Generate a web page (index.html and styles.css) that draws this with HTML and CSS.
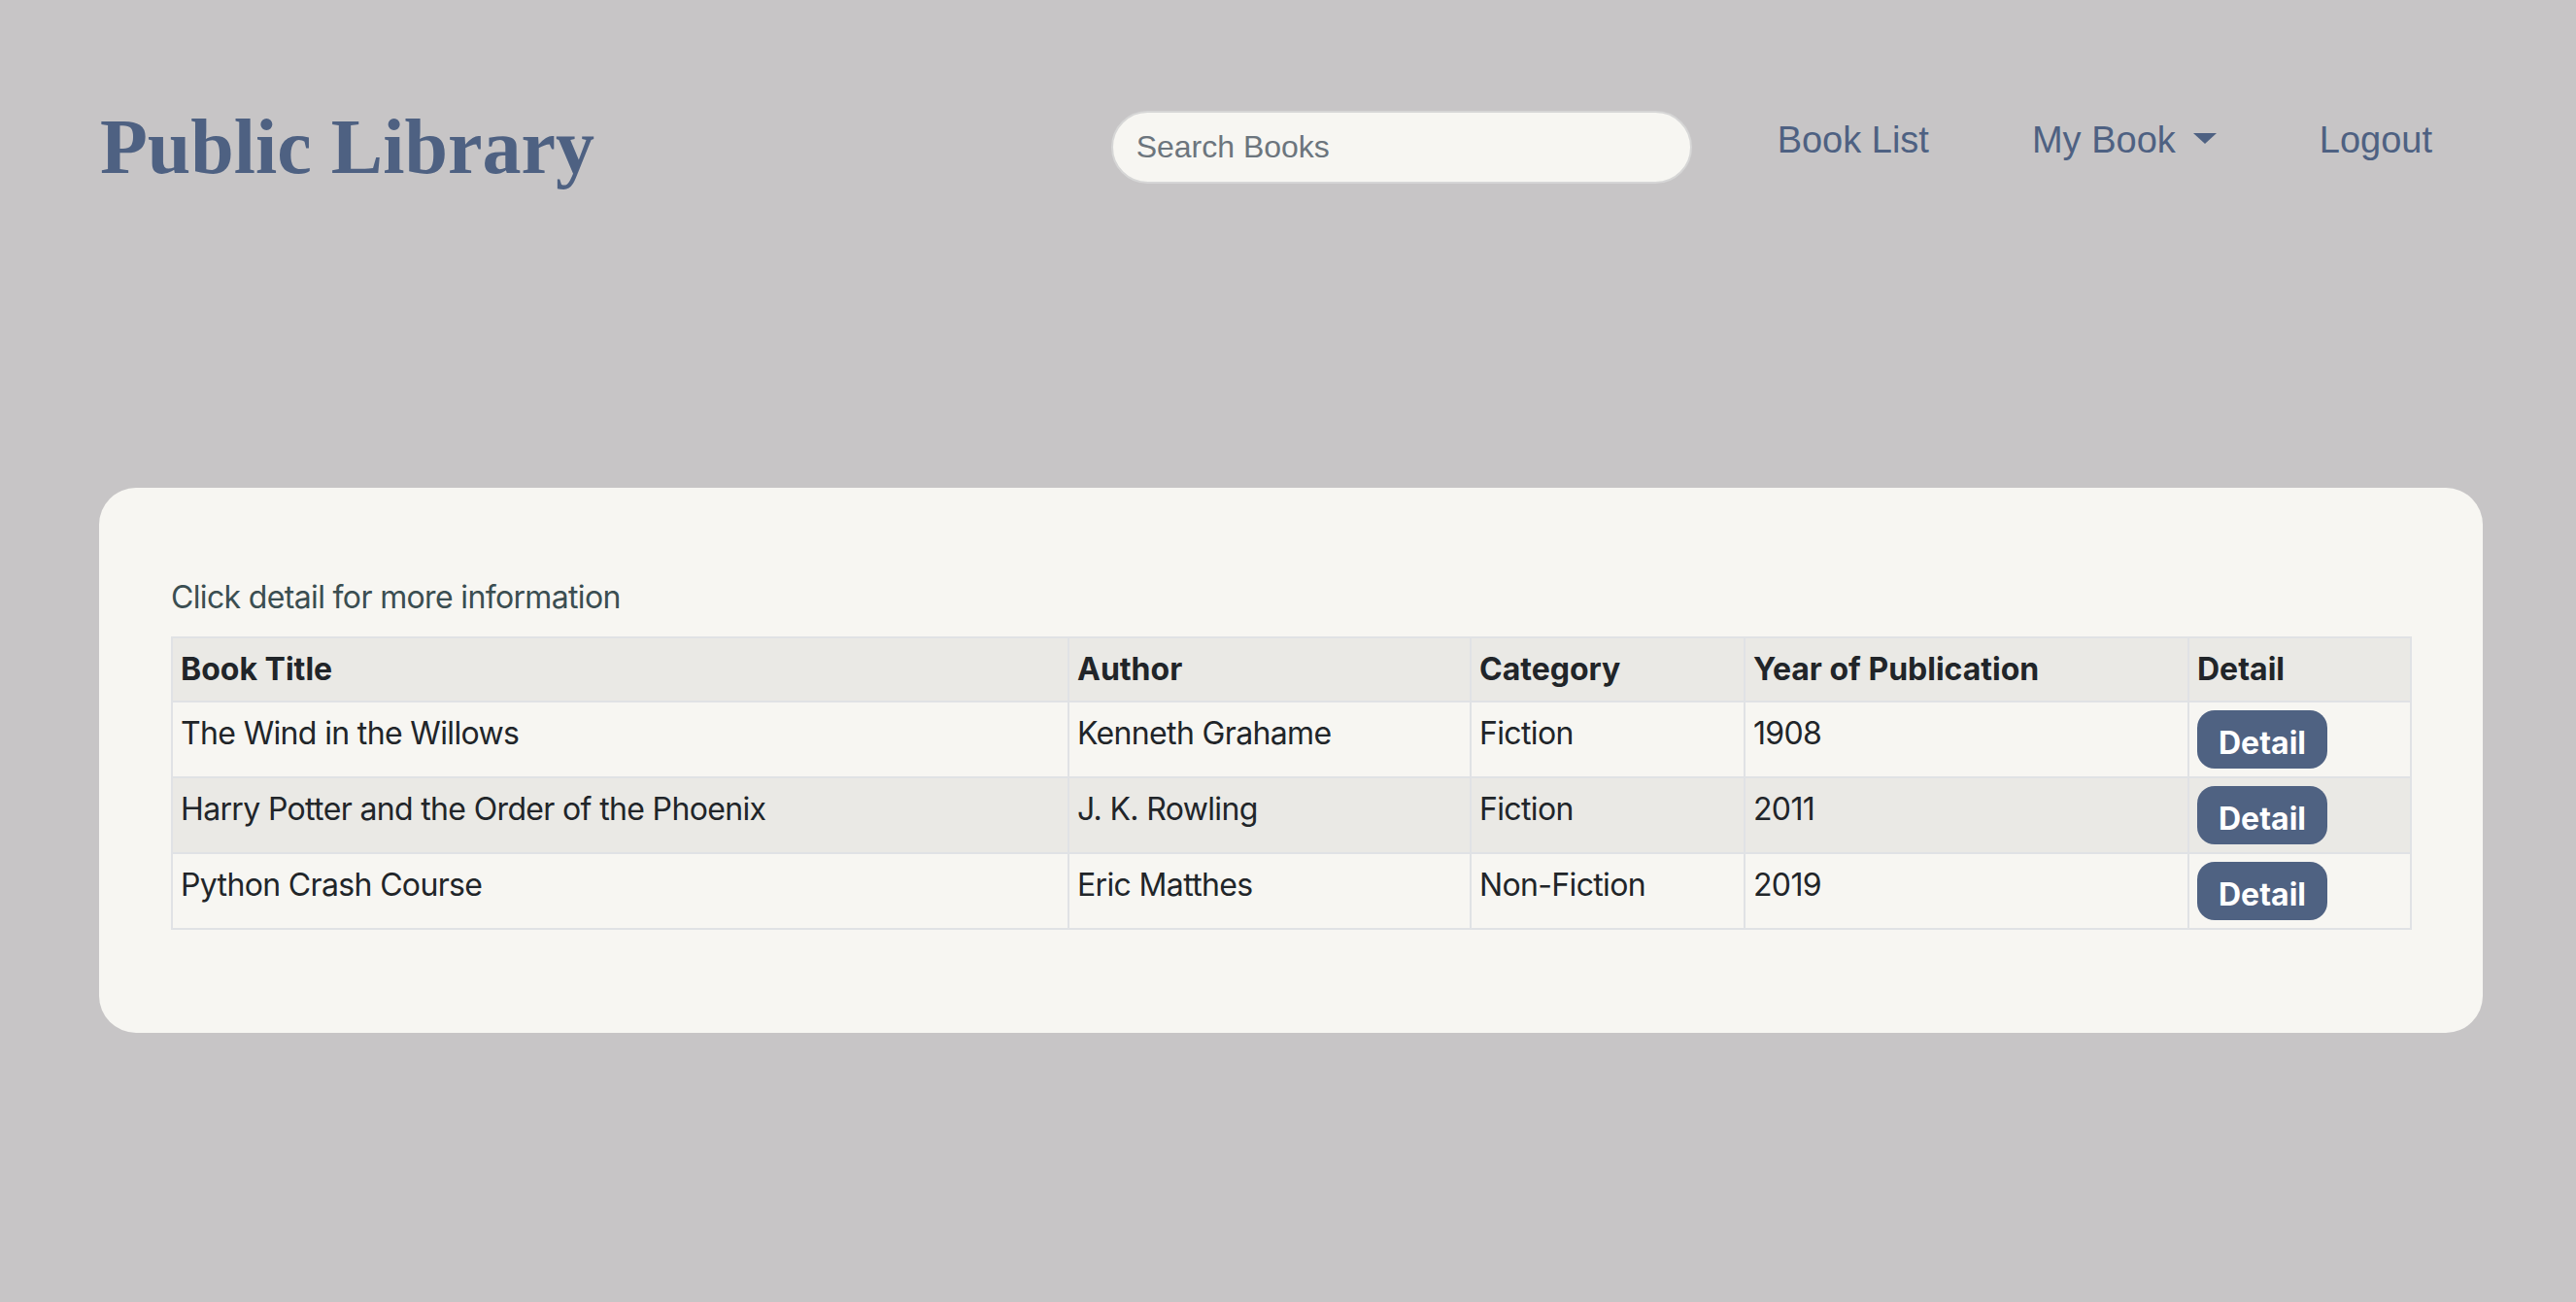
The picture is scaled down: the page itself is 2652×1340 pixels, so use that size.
FILE: index.html
```html
<!DOCTYPE html>
<html lang="en">
<head>
<meta charset="utf-8">
<title>Public Library</title>
<link rel="stylesheet" href="styles.css">
</head>
<body>
<div class="page">
  <header class="header">
    <h1 class="brand">Public Library</h1>
    <nav class="nav">
      <input class="search" type="text" placeholder="Search Books">
      <a class="nav-link" href="#">Book List</a>
      <a class="nav-link dropdown" href="#">My Book<span class="caret"></span></a>
      <a class="nav-link" href="#">Logout</a>
    </nav>
  </header>
  <main class="card">
    <p class="hint">Click detail for more information</p>
    <table class="books">
      <thead>
        <tr>
          <th class="c-title">Book Title</th>
          <th class="c-author">Author</th>
          <th class="c-cat">Category</th>
          <th class="c-year">Year of Publication</th>
          <th class="c-detail">Detail</th>
        </tr>
      </thead>
      <tbody>
        <tr>
          <td>The Wind in the Willows</td>
          <td>Kenneth Grahame</td>
          <td>Fiction</td>
          <td>1908</td>
          <td><button class="btn">Detail</button></td>
        </tr>
        <tr class="alt">
          <td>Harry Potter and the Order of the Phoenix</td>
          <td>J. K. Rowling</td>
          <td>Fiction</td>
          <td>2011</td>
          <td><button class="btn">Detail</button></td>
        </tr>
        <tr>
          <td>Python Crash Course</td>
          <td>Eric Matthes</td>
          <td>Non-Fiction</td>
          <td>2019</td>
          <td><button class="btn">Detail</button></td>
        </tr>
      </tbody>
    </table>
  </main>
</div>
</body>
</html>
```
FILE: styles.css
```css
html, body {
  margin: 0;
  padding: 0;
}
body {
  background: #c7c5c6;
  font-family: Inter, "Noto Sans", sans-serif;
  font-size: 32px;
  line-height: 48px;
  color: #212529;
}
.page {
  padding: 0 96px 0 102px;
}
.header {
  display: flex;
  align-items: flex-start;
  padding: 103px 52px 0 1px;
  height: 502px;
  box-sizing: border-box;
}
.brand {
  margin: 0;
  font-family: "Liberation Serif", "Times New Roman", serif;
  font-weight: bold;
  font-size: 80px;
  line-height: 96px;
  color: #4e6182;
}
.nav {
  margin-left: auto;
  margin-top: 11px;
  display: flex;
  align-items: center;
}
.search {
  width: 598px;
  height: 75px;
  box-sizing: border-box;
  border: 2px solid #d6d6d6;
  border-radius: 38px;
  background: #f7f6f2;
  padding: 0 24px;
  font-family: "Liberation Sans", Arial, sans-serif;
  font-size: 32px;
  color: #495057;
  margin-right: 88px;
  outline: none;
}
.search::placeholder {
  color: #6c757d;
}
.nav-link {
  font-family: "Liberation Sans", Arial, sans-serif;
  font-size: 38px;
  line-height: 57px;
  color: #4e6182;
  text-decoration: none;
  margin-right: 106px;
  margin-top: -15px;
}
.nav-link:last-child {
  margin-right: 0;
}
.caret {
  display: inline-block;
  width: 0;
  height: 0;
  margin-left: 18px;
  vertical-align: 9px;
  border-top: 11px solid #4e6182;
  border-left: 12px solid transparent;
  border-right: 12px solid transparent;
}
.card {
  display: block;
  background: #f7f6f2;
  border-radius: 38px;
  padding: 89px 75px 74px 74px;
}
.hint {
  margin: 0 0 16px 0;
  color: #3b4e51;
  letter-spacing: -0.65px;
}
.books {
  width: 100%;
  border-collapse: collapse;
  table-layout: fixed;
  margin-bottom: 32px;
}
.books th,
.books td {
  box-sizing: border-box;
  border: 2px solid #e0e2e5;
  padding: 8px 8px;
  text-align: left;
  vertical-align: top;
}
.books td {
  letter-spacing: -0.65px;
}
.books th {
  background: #eae9e5;
  font-weight: 700;
}
.books tbody tr {
  background: #f7f6f2;
}
.books tbody tr.alt {
  background: #eae9e5;
}
.c-title { width: 923px; }
.c-author { width: 414px; }
.c-cat { width: 282px; }
.c-year { width: 457px; }
.c-detail { width: 229px; }
.btn {
  display: block;
  height: 60px;
  box-sizing: border-box;
  padding: 10px 22px 2px;
  border: 0;
  border-radius: 18px;
  background: #4f6282;
  color: #ffffff;
  font-family: Inter, "Noto Sans", sans-serif;
  font-size: 32px;
  font-weight: 700;
  line-height: 48px;
  letter-spacing: 0;
}
```
